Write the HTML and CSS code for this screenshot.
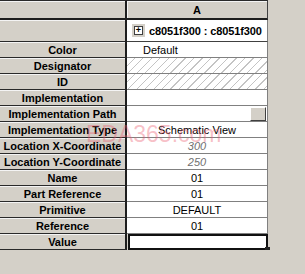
FILE: index.html
```html
<!DOCTYPE html>
<html lang="en">
<head>
    <meta charset="UTF-8">
    <title>Part Properties</title>
    <link rel="stylesheet" href="styles.css">
</head>
<body>
    <div class="sheet">
        <div class="hd top"></div>
        <div class="col top">A</div>

        <div class="hd tall"></div>
        <div class="val part"><span class="expand"><span class="box">+</span></span><b>c8051f300 : c8051f300</b></div>

        <div class="hd">Color</div>
        <div class="val left">Default</div>

        <div class="hd">Designator</div>
        <div class="val hatch"></div>

        <div class="hd">ID</div>
        <div class="val hatch"></div>

        <div class="hd">Implementation</div>
        <div class="val"></div>

        <div class="hd">Implementation Path</div>
        <div class="val path"><span class="dots"></span></div>

        <div class="hd">Implementation Type</div>
        <div class="val">Schematic View</div>

        <div class="hd">Location X-Coordinate</div>
        <div class="val dim">300</div>

        <div class="hd">Location Y-Coordinate</div>
        <div class="val dim">250</div>

        <div class="hd">Name</div>
        <div class="val">01</div>

        <div class="hd">Part Reference</div>
        <div class="val">01</div>

        <div class="hd">Primitive</div>
        <div class="val">DEFAULT</div>

        <div class="hd">Reference</div>
        <div class="val">01</div>

        <div class="hd">Value</div>
        <div class="val current"><span class="handle"></span></div>

        <div class="mark">EDA365.com</div>
    </div>
</body>
</html>
```

FILE: styles.css
```css
body {
    margin: 0;
    background-color: #d4d0c8;
    font-family: 'Liberation Sans', Arial, sans-serif;
    font-size: 11px;
    color: #000;
}

.sheet {
    position: relative;
    display: grid;
    grid-template-columns: 127px 141px;
    grid-template-rows: 20px 22px repeat(13, 16px);
    width: 268px;
}

.hd {
    box-sizing: border-box;
    background-color: #d4d0c8;
    border-right: 2px solid #1e1e1e;
    border-bottom: 1px solid #2a2a2a;
    box-shadow: inset 0 1px 0 #f4f4f4;
    font-weight: bold;
    display: flex;
    align-items: center;
    justify-content: center;
    white-space: nowrap;
}

.top {
    border-top: 1px solid #2a2a2a;
}

.col {
    box-sizing: border-box;
    background-color: #d4d0c8;
    border-right: 1px solid #404040;
    border-bottom: 2px solid #1e1e1e;
    box-shadow: inset 1px 1px 0 #f4f4f4;
    font-weight: bold;
    display: flex;
    align-items: center;
    justify-content: center;
}

.hd.top {
    border-bottom: 2px solid #1e1e1e;
}

.val {
    position: relative;
    box-sizing: border-box;
    background-color: #fff;
    border-right: 1px solid #808080;
    border-bottom: 1px solid #808080;
    display: flex;
    align-items: center;
    justify-content: center;
    white-space: nowrap;
}

.left {
    justify-content: flex-start;
    padding-left: 16px;
}

.part {
    justify-content: flex-start;
    padding-left: 5px;
    gap: 4px;
    border-bottom-color: #404040;
    overflow: hidden;
}

.part b {
    letter-spacing: -0.1px;
}

.expand {
    flex: none;
    width: 13px;
    height: 13px;
    background-color: #d4d0c8;
    display: flex;
    align-items: center;
    justify-content: center;
}

.box {
    box-sizing: border-box;
    width: 9px;
    height: 9px;
    border: 1px solid #404040;
    background-color: #fff;
    font-size: 9px;
    line-height: 6px;
    text-align: center;
    font-weight: bold;
}

.hatch {
    background: repeating-linear-gradient(135deg, #fff 0 5px, #c4c4c4 5px 6px);
}

.path {
    justify-content: flex-end;
    padding-right: 1px;
}

.dots {
    box-sizing: border-box;
    width: 16px;
    height: 14px;
    background-color: #d4d0c8;
    border-top: 1px solid #fff;
    border-left: 1px solid #fff;
    border-right: 1px solid #404040;
    border-bottom: 1px solid #404040;
}

.dim {
    color: #707070;
    font-style: italic;
}

.current {
    border: 2px solid #111;
    margin-left: 1px;
}

.handle {
    position: absolute;
    right: -4px;
    bottom: -4px;
    width: 5px;
    height: 5px;
    background-color: #222;
}

.mark {
    position: absolute;
    left: 86px;
    top: 121px;
    font-size: 23px;
    color: rgba(235, 90, 110, 0.38);
    pointer-events: none;
}
```
